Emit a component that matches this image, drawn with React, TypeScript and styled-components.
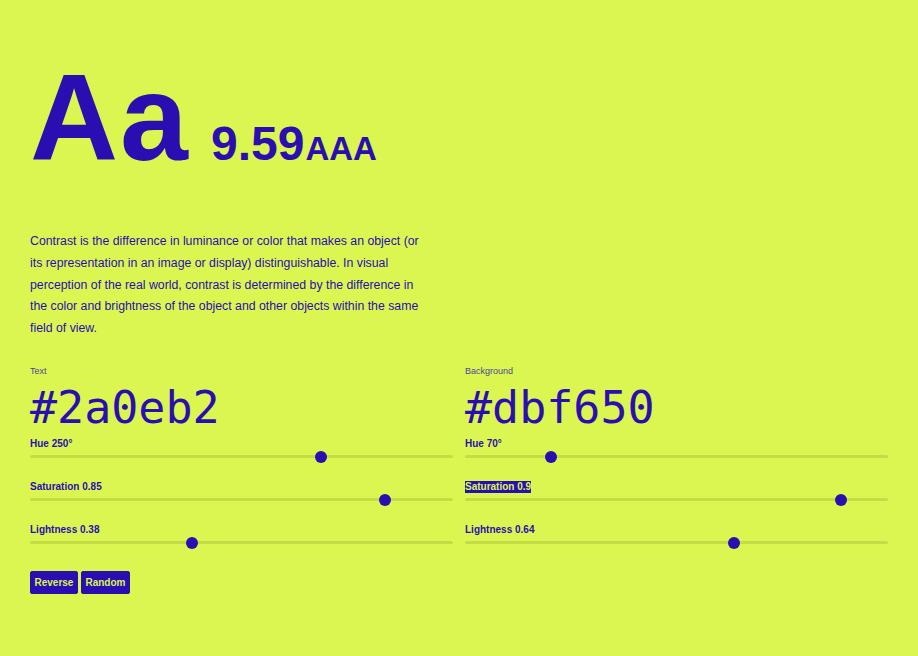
import { useState } from "react";
import styled, { createGlobalStyle, css } from "styled-components";

const ink = "#2a0eb2";
const paper = "#dbf650";

const GlobalStyle = createGlobalStyle`
  html, body {
    margin: 0;
    padding: 0;
    background: ${paper};
  }
  body {
    font-family: "Liberation Sans", Arial, sans-serif;
    color: ${ink};
  }
`;

type Channel = {
  key: string;
  name: string;
  value: number;
  min: number;
  max: number;
  step: number;
  unit?: string;
  selected?: boolean;
};

type Swatch = {
  title: string;
  hex: string;
  channels: Channel[];
};

const swatches: Swatch[] = [
  {
    title: "Text",
    hex: "#2a0eb2",
    channels: [
      { key: "h", name: "Hue", value: 250, min: 0, max: 360, step: 1, unit: "°" },
      { key: "s", name: "Saturation", value: 0.85, min: 0, max: 1, step: 0.01 },
      { key: "l", name: "Lightness", value: 0.38, min: 0, max: 1, step: 0.01 },
    ],
  },
  {
    title: "Background",
    hex: "#dbf650",
    channels: [
      { key: "h", name: "Hue", value: 70, min: 0, max: 360, step: 1, unit: "°" },
      { key: "s", name: "Saturation", value: 0.9, min: 0, max: 1, step: 0.01, selected: true },
      { key: "l", name: "Lightness", value: 0.64, min: 0, max: 1, step: 0.01 },
    ],
  },
];

function Slider({ channel }: { channel: Channel }) {
  const [value, setValue] = useState(channel.value);
  return (
    <SliderRow>
      <ChannelLabel $selected={channel.selected}>
        {channel.name} {value}
        {channel.unit}
      </ChannelLabel>
      <Range
        type="range"
        min={channel.min}
        max={channel.max}
        step={channel.step}
        value={value}
        onChange={(e) => setValue(Number(e.target.value))}
      />
    </SliderRow>
  );
}

export default function App() {
  return (
    <Page>
      <GlobalStyle />
      <Header>
        <Specimen>Aa</Specimen>
        <Ratio>9.59</Ratio>
        <Grade>AAA</Grade>
      </Header>

      <Intro>
        Contrast is the difference in luminance or color that makes an object
        (or its representation in an image or display) distinguishable. In
        visual perception of the real world, contrast is determined by the
        difference in the color and brightness of the object and other objects
        within the same field of view.
      </Intro>

      <Columns>
        {swatches.map((swatch) => (
          <Column key={swatch.title}>
            <SwatchTitle>{swatch.title}</SwatchTitle>
            <Hex>{swatch.hex}</Hex>
            {swatch.channels.map((c) => (
              <Slider key={c.key} channel={c} />
            ))}
          </Column>
        ))}
      </Columns>

      <Actions>
        <Button>Reverse</Button>
        <Button>Random</Button>
      </Actions>
    </Page>
  );
}

const Page = styled.div`
  padding: 57px 30px 40px;
  min-height: 656px;
  box-sizing: border-box;
`;

const Header = styled.div`
  display: flex;
  align-items: baseline;
  line-height: 1;
  font-weight: 700;
`;

const Specimen = styled.span`
  font-size: 122px;
  letter-spacing: 2px;
  margin-right: 21px;
`;

const Ratio = styled.span`
  font-size: 48px;
`;

const Grade = styled.span`
  font-size: 33px;
  margin-left: 1px;
`;

const Intro = styled.p`
  max-width: 400px;
  margin: 52px 0 0;
  font-size: 12.3px;
  line-height: 21.75px;
`;

const Columns = styled.div`
  display: grid;
  grid-template-columns: 1fr 1fr;
  column-gap: 12px;
  margin-top: 25px;
`;

const Column = styled.div`
  display: flex;
  flex-direction: column;
`;

const SwatchTitle = styled.div`
  font-size: 9px;
  line-height: 12px;
  opacity: 0.8;
`;

const Hex = styled.div`
  font-family: "DejaVu Sans Mono", "Liberation Mono", monospace;
  font-size: 45px;
  line-height: 52px;
  margin-top: 5px;
`;

const SliderRow = styled.div`
  display: flex;
  flex-direction: column;
  margin-top: 4px;
`;

const ChannelLabel = styled.span<{ $selected?: boolean }>`
  align-self: flex-start;
  font-size: 10px;
  font-weight: 700;
  line-height: 12px;
  ${({ $selected }) =>
    $selected &&
    css`
      background: ${ink};
      color: ${paper};
    `}
`;

const Range = styled.input`
  -webkit-appearance: none;
  appearance: none;
  width: 100%;
  height: 12px;
  margin: 1px 0 14px;
  background: transparent;

  &::-webkit-slider-runnable-track {
    height: 3px;
    background: rgba(0, 0, 0, 0.1);
    border-radius: 2px;
  }
  &::-webkit-slider-thumb {
    -webkit-appearance: none;
    width: 12px;
    height: 12px;
    margin-top: -4.5px;
    border-radius: 50%;
    background: ${ink};
    border: none;
  }
  &::-moz-range-track {
    height: 3px;
    background: rgba(0, 0, 0, 0.1);
  }
  &::-moz-range-thumb {
    width: 12px;
    height: 12px;
    border-radius: 50%;
    background: ${ink};
    border: none;
  }
`;

const Actions = styled.div`
  display: flex;
  gap: 3px;
  margin-top: 8px;
`;

const Button = styled.button`
  font-family: "Liberation Sans", Arial, sans-serif;
  font-size: 10px;
  font-weight: 700;
  color: ${paper};
  background: ${ink};
  border: 1px solid ${ink};
  border-radius: 2px;
  padding: 0 3.5px;
  height: 23px;
  cursor: pointer;
`;
